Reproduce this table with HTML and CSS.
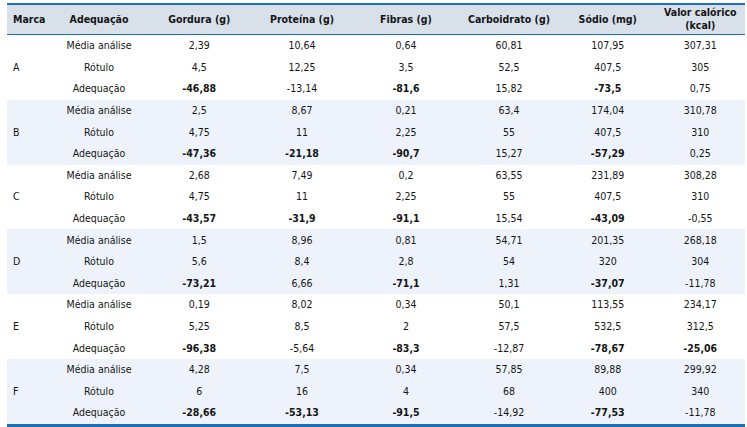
FILE: index.html
```html
<!DOCTYPE html>
<html lang="pt">
<head>
<meta charset="utf-8">
<link rel="stylesheet" href="styles.css">
</head>
<body>
<table class="tbl">
  <colgroup>
    <col class="c-marca"><col class="c-adeq"><col class="c-gord"><col class="c-prot"><col class="c-fib"><col class="c-carb"><col class="c-sod"><col class="c-val">
  </colgroup>
  <thead>
    <tr>
      <th class="left">Marca</th><th>Adequação</th><th>Gordura (g)</th><th>Proteína (g)</th><th>Fibras (g)</th><th>Carboidrato (g)</th><th>Sódio (mg)</th><th>Valor calórico<br>(kcal)</th>
    </tr>
  </thead>
  <tbody>
    <tr><td class="left" rowspan="3">A</td><td>Média análise</td><td>2,39</td><td>10,64</td><td>0,64</td><td>60,81</td><td>107,95</td><td>307,31</td></tr>
    <tr><td>Rótulo</td><td>4,5</td><td>12,25</td><td>3,5</td><td>52,5</td><td>407,5</td><td>305</td></tr>
    <tr><td>Adequação</td><td class="b">-46,88</td><td>-13,14</td><td class="b">-81,6</td><td>15,82</td><td class="b">-73,5</td><td>0,75</td></tr>
  </tbody>
  <tbody class="band">
    <tr><td class="left" rowspan="3">B</td><td>Média análise</td><td>2,5</td><td>8,67</td><td>0,21</td><td>63,4</td><td>174,04</td><td>310,78</td></tr>
    <tr><td>Rótulo</td><td>4,75</td><td>11</td><td>2,25</td><td>55</td><td>407,5</td><td>310</td></tr>
    <tr><td>Adequação</td><td class="b">-47,36</td><td class="b">-21,18</td><td class="b">-90,7</td><td>15,27</td><td class="b">-57,29</td><td>0,25</td></tr>
  </tbody>
  <tbody>
    <tr><td class="left" rowspan="3">C</td><td>Média análise</td><td>2,68</td><td>7,49</td><td>0,2</td><td>63,55</td><td>231,89</td><td>308,28</td></tr>
    <tr><td>Rótulo</td><td>4,75</td><td>11</td><td>2,25</td><td>55</td><td>407,5</td><td>310</td></tr>
    <tr><td>Adequação</td><td class="b">-43,57</td><td class="b">-31,9</td><td class="b">-91,1</td><td>15,54</td><td class="b">-43,09</td><td>-0,55</td></tr>
  </tbody>
  <tbody class="band">
    <tr><td class="left" rowspan="3">D</td><td>Média análise</td><td>1,5</td><td>8,96</td><td>0,81</td><td>54,71</td><td>201,35</td><td>268,18</td></tr>
    <tr><td>Rótulo</td><td>5,6</td><td>8,4</td><td>2,8</td><td>54</td><td>320</td><td>304</td></tr>
    <tr><td>Adequação</td><td class="b">-73,21</td><td>6,66</td><td class="b">-71,1</td><td>1,31</td><td class="b">-37,07</td><td>-11,78</td></tr>
  </tbody>
  <tbody>
    <tr><td class="left" rowspan="3">E</td><td>Média análise</td><td>0,19</td><td>8,02</td><td>0,34</td><td>50,1</td><td>113,55</td><td>234,17</td></tr>
    <tr><td>Rótulo</td><td>5,25</td><td>8,5</td><td>2</td><td>57,5</td><td>532,5</td><td>312,5</td></tr>
    <tr><td>Adequação</td><td class="b">-96,38</td><td>-5,64</td><td class="b">-83,3</td><td>-12,87</td><td class="b">-78,67</td><td class="b">-25,06</td></tr>
  </tbody>
  <tbody class="band">
    <tr><td class="left" rowspan="3">F</td><td>Média análise</td><td>4,28</td><td>7,5</td><td>0,34</td><td>57,85</td><td>89,88</td><td>299,92</td></tr>
    <tr><td>Rótulo</td><td>6</td><td>16</td><td>4</td><td>68</td><td>400</td><td>340</td></tr>
    <tr><td>Adequação</td><td class="b">-28,66</td><td class="b">-53,13</td><td class="b">-91,5</td><td>-14,92</td><td class="b">-77,53</td><td>-11,78</td></tr>
  </tbody>
</table>
</body>
</html>
```
FILE: styles.css
```css
html, body {
  margin: 0;
  padding: 0;
  background: #ffffff;
}
body {
  font-family: "DejaVu Sans Condensed", "DejaVu Sans", sans-serif;
  font-size: 10.5px;
  color: #151515;
}
.tbl {
  margin: 3px 0 0 7px;
  width: 738px;
  table-layout: fixed;
  border-collapse: separate;
  border-spacing: 0;
  border-top: 2px solid #1c6fb6;
  border-bottom: 3px solid #1c6fb6;
}
.c-marca { width: 42.5px; }
.c-adeq { width: 99px; }
.c-gord { width: 101.5px; }
.c-prot { width: 104px; }
.c-fib { width: 104px; }
.c-carb { width: 102px; }
.c-sod { width: 95.5px; }
.c-val { width: 89.5px; }
thead tr {
  background: #d8e1ea;
  height: 30px;
}
thead th {
  font-weight: bold;
  text-align: center;
  vertical-align: middle;
  padding: 0 0 1px;
  line-height: 13px;
  border-bottom: 1px solid #1c6fb6;
}
tbody tr {
  height: 21.6px;
}
tbody td {
  padding: 0;
  text-align: center;
  vertical-align: middle;
  line-height: 13px;
}
.band {
  background: #eef3fb;
}
.left {
  text-align: left;
  padding-left: 6px;
}
th.left {
  padding-left: 6px;
}
.b {
  font-weight: bold;
}
```
